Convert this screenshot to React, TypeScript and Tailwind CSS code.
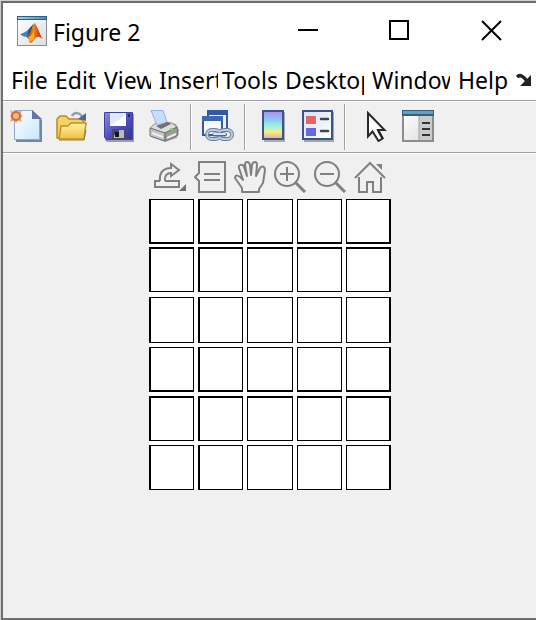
import type { ReactNode } from "react";

function MatlabIcon() {
  return (
    <svg width="30" height="30" viewBox="0 0 30 30" aria-hidden="true">
      <defs>
        <linearGradient id="appBg" x1="0" y1="0" x2="1" y2="1">
          <stop offset="0" stopColor="#ffffff" />
          <stop offset="1" stopColor="#dcdde2" />
        </linearGradient>
        <linearGradient id="appBar" x1="0" x2="1">
          <stop offset="0" stopColor="#9ed0e6" />
          <stop offset="1" stopColor="#4b8db5" />
        </linearGradient>
        <linearGradient id="peak" x1="0" y1="0" x2="1" y2="0">
          <stop offset="0" stopColor="#7a2418" />
          <stop offset="0.45" stopColor="#f08a1c" />
          <stop offset="0.65" stopColor="#e2571a" />
          <stop offset="1" stopColor="#a32a14" />
        </linearGradient>
      </defs>
      <rect x="0.5" y="0.5" width="29" height="29" fill="url(#appBg)" stroke="#8a8d92" />
      <rect x="0" y="0" width="30" height="4" fill="#2f5f86" />
      <rect x="1" y="1" width="28" height="2" fill="url(#appBar)" />
      <path d="M3 18.5 L9 15.5 L12 13 L16.5 8 L14 17 L10 21 L7 20.5 Z" fill="#3f83bb" />
      <path d="M12 13 L16.5 8 L14 16 L10 20 Z" fill="#2b4f7c" />
      <path d="M17.5 7 C19.5 8 21 14 25.5 23 C22.5 20.5 20.5 19.5 18 23 C16.5 25 14.5 27 13 27 C12.5 24 11 21.5 9.5 21 C14 18 14.5 10 17.5 7 Z" fill="url(#peak)" />
      <path d="M13 26.5 C12.5 24 11.5 22 11 21 C14 20 15 18 17 15 L17 23 Z" fill="#f7a928" />
    </svg>
  );
}

function NewIcon() {
  return (
    <svg width="32" height="32" viewBox="0 0 32 32" aria-hidden="true">
      <defs>
        <linearGradient id="page" x1="0" y1="0" x2="1" y2="1">
          <stop offset="0" stopColor="#ffffff" />
          <stop offset="1" stopColor="#c9e6fa" />
        </linearGradient>
      </defs>
      <path d="M6 3 H25 L32 10 V32 H6 Z" fill="#7187a6" />
      <path d="M4.5 0.5 H22.5 L29.5 8 V29.5 H4.5 Z" fill="url(#page)" stroke="#8ea8ca" />
      <path d="M22 0 L32 9 H22 Z" fill="#6873a6" />
      <path d="M0 0 L4 2 L6 0 L8 2 L12 0 L10.5 4 L13 6 L10.5 8 L12 12 L8 10.5 L6 13 L4 10.5 L0 12 L1.5 8 L0 6 L1.5 4 Z" fill="#e6a08a" />
      <circle cx="6" cy="6" r="4" fill="#f4c06e" stroke="#d8653f" strokeWidth="2" />
    </svg>
  );
}

function OpenIcon() {
  return (
    <svg width="32" height="32" viewBox="0 0 32 32" aria-hidden="true">
      <defs>
        <linearGradient id="folder" x1="0" y1="0" x2="0" y2="1">
          <stop offset="0" stopColor="#fff3a0" />
          <stop offset="1" stopColor="#efbf45" />
        </linearGradient>
      </defs>
      <path d="M1 28 V9 L4 6 H10 L13 9 H25 L28 12 V28 Z" fill="#f3d266" stroke="#b98a28" strokeWidth="1.5" strokeLinejoin="round" />
      <path d="M3 29 L5 16 H12 L15 13 H30 L28 29 Z" fill="url(#folder)" stroke="#c0912f" strokeWidth="1.5" strokeLinejoin="round" />
      <path d="M3 30 H28 L30 20" fill="none" stroke="#9b792f" />
      <path d="M16 6 C18 2 24 2 26 7" fill="none" stroke="#8ba0b5" strokeWidth="2.5" />
      <path d="M22 9 L30 3 V11 Z" fill="#50677f" />
    </svg>
  );
}

function SaveIcon() {
  return (
    <svg width="32" height="32" viewBox="0 0 32 32" aria-hidden="true">
      <defs>
        <linearGradient id="disk" x1="0" y1="0" x2="1" y2="1">
          <stop offset="0" stopColor="#8a8be6" />
          <stop offset="0.5" stopColor="#5050c2" />
          <stop offset="1" stopColor="#33338e" />
        </linearGradient>
      </defs>
      <path d="M4 4 H32 V32 H5 L3 30 Z" fill="#9a9cab" />
      <path d="M2.5 2.5 H30.5 V29.5 H4.5 L2.5 27.5 Z" fill="url(#disk)" stroke="#4142a0" />
      <rect x="8" y="3" width="16" height="13" fill="#dfeaff" />
      <path d="M8 16 L24 5 V16 Z" fill="#ffffff" />
      <rect x="26" y="4" width="2" height="3" fill="#25256d" />
      <rect x="10" y="19" width="13" height="10" fill="#4a4a5a" />
      <path d="M17 20 H22 V28 H12 V25 H17 Z" fill="#b9b9c4" />
      <rect x="13" y="22" width="4" height="5" fill="#15151c" />
    </svg>
  );
}

function PrintIcon() {
  return (
    <svg width="32" height="32" viewBox="0 0 32 32" aria-hidden="true">
      <path d="M3 18 L12 11 L28 14 L31 20 L29 28 L17 32 L3 27 Z" fill="#a5a5a5" />
      <path d="M2 18 L9 12 L24 13 L29 17 L17 23 Z" fill="#dededc" stroke="#858585" />
      <path d="M2 18 L17 23 V31 L2 26 Z" fill="#c3c3c0" stroke="#767676" />
      <path d="M17 23 L29 17 L30 25 L17 31 Z" fill="#9b9c9a" stroke="#707070" />
      <path d="M3 0.5 H15 L19 12 L9 15 Z" fill="#c4defc" stroke="#94b3dc" />
      <path d="M8 16 L20 12 L23 14 L13 19 Z" fill="#6f7375" />
      <path d="M4 23 L15 27 M19 28 L28 24" stroke="#ededed" strokeWidth="2" />
      <rect x="22" y="18" width="3" height="2" fill="#8bd44e" />
    </svg>
  );
}

function LinkIcon() {
  return (
    <svg width="32" height="32" viewBox="0 0 32 32" aria-hidden="true">
      <rect x="6" y="1" width="19" height="19" fill="#eaf0fa" stroke="#3b5b9c" strokeWidth="2" />
      <rect x="5" y="0" width="21" height="5" fill="#3459a0" />
      <rect x="1" y="7" width="19" height="18" fill="#f6f9ff" stroke="#38589b" strokeWidth="2" />
      <rect x="0" y="6" width="21" height="5" fill="#3f67ad" />
      <g fill="none">
        <rect x="5" y="20" width="13" height="9" rx="4.5" stroke="#6a80a0" strokeWidth="4" />
        <rect x="17" y="20" width="13" height="9" rx="4.5" stroke="#6a80a0" strokeWidth="4" />
        <rect x="5" y="20" width="13" height="9" rx="4.5" stroke="#b9cde2" strokeWidth="2" />
        <rect x="17" y="20" width="13" height="9" rx="4.5" stroke="#b9cde2" strokeWidth="2" />
        <path d="M12 24.5 H23" stroke="#52698a" strokeWidth="4" strokeLinecap="round" />
        <path d="M12 24 H23" stroke="#dbe7f3" strokeWidth="2" strokeLinecap="round" />
      </g>
    </svg>
  );
}

function ColorbarIcon() {
  return (
    <svg width="32" height="32" viewBox="0 0 32 32" aria-hidden="true">
      <defs>
        <linearGradient id="bar" x1="0" y1="0" x2="0" y2="1">
          <stop offset="0" stopColor="#ab8df0" />
          <stop offset="0.3" stopColor="#8fc4f5" />
          <stop offset="0.5" stopColor="#93efe0" />
          <stop offset="0.75" stopColor="#f3ee90" />
          <stop offset="1" stopColor="#f5a08d" />
        </linearGradient>
      </defs>
      <rect x="8" y="2" width="21" height="30" fill="#a9acb5" />
      <rect x="7" y="1" width="20" height="28" fill="url(#bar)" stroke="#3d5488" strokeWidth="2" />
    </svg>
  );
}

function LegendIcon() {
  return (
    <svg width="32" height="32" viewBox="0 0 32 32" aria-hidden="true">
      <defs>
        <linearGradient id="legend" x1="0" y1="0" x2="1" y2="1">
          <stop offset="0" stopColor="#d5e2f2" />
          <stop offset="1" stopColor="#ffffff" />
        </linearGradient>
      </defs>
      <rect x="2" y="2" width="30" height="30" fill="#a2a5af" />
      <rect x="1" y="1" width="29" height="28" fill="url(#legend)" stroke="#3d5488" strokeWidth="2" />
      <rect x="4" y="6" width="10" height="8" fill="#e56664" />
      <rect x="4" y="18" width="10" height="8" fill="#6868e4" />
      <path d="M19 9 H26 M19 21 H26" stroke="#42464c" strokeWidth="2.5" strokeLinecap="round" />
    </svg>
  );
}

function PointerIcon() {
  return (
    <svg width="32" height="32" viewBox="0 0 32 32" aria-hidden="true">
      <path d="M12 3 V26.5 L16.5 21.5 L22.5 31 L26.5 28.5 L22 20 H28.5 Z" fill="#fff" stroke="#292929" strokeWidth="2" />
      <path d="M22 20 L27 29" stroke="#222" strokeWidth="2" />
    </svg>
  );
}

function InspectorIcon() {
  return (
    <svg width="32" height="32" viewBox="0 0 32 32" aria-hidden="true">
      <defs>
        <linearGradient id="pane" x1="0" y1="0" x2="1" y2="1">
          <stop offset="0" stopColor="#ffffff" />
          <stop offset="1" stopColor="#dcdcdc" />
        </linearGradient>
      </defs>
      <rect x="1" y="1" width="30" height="30" fill="url(#pane)" stroke="#8d8d8d" strokeWidth="2" />
      <rect x="17" y="5" width="13" height="25" fill="#cbcbcb" />
      <path d="M17 5 V30" stroke="#a3a3a3" strokeWidth="1" />
      <rect x="0" y="0" width="32" height="6" fill="#365f7f" />
      <rect x="1" y="1" width="30" height="3" fill="#659ec1" />
      <path d="M20 13 H28 M20 19 H28 M20 25 H28" stroke="#333" strokeWidth="2" />
    </svg>
  );
}

function AxesIcon({ children }: { children: ReactNode }) {
  return (
    <svg width="32" height="32" viewBox="0 0 32 32" fill="none" stroke="#808080" strokeWidth="2" aria-hidden="true">
      {children}
    </svg>
  );
}

const axesTools = [
  {
    label: "Export",
    icon: (
      <AxesIcon>
        <path d="M6 20 H1 V26 H25 V20 H11" />
        <path d="M6 20 C5 12 9 7 17 7 V3 L25 9 L17 15 V12 C13 12 10 15 11 20" strokeWidth="2" />
        <path d="M32 23 V30 H25 Z" fill="#707070" stroke="none" />
      </AxesIcon>
    ),
  },
  {
    label: "Data tips",
    icon: (
      <AxesIcon>
        <path d="M5 1 H31 V31 H5 V20 L1 16 L5 12 Z" />
        <path d="M10 13 H26 M10 19 H26" />
      </AxesIcon>
    ),
  },
  {
    label: "Pan",
    icon: (
      <AxesIcon>
        <path d="M8 31 V27 L1 17 C1 13 5 14 9 19 L5 7 C4 3 9 3 10 6 L13 15 L11 4 C11 0 15 0 16 4 L17 14 L18 4 C19 0 23 0 23 4 L22 15 L26 7 C28 4 31 6 31 9 L29 22 L25 28 V31 Z" strokeLinejoin="round" />
      </AxesIcon>
    ),
  },
  {
    label: "Zoom in",
    icon: (
      <AxesIcon>
        <circle cx="13" cy="13" r="12" />
        <path d="M6 13 H20 M13 6 V20" />
        <path d="M21 21 L31 31" strokeWidth="3" />
      </AxesIcon>
    ),
  },
  {
    label: "Zoom out",
    icon: (
      <AxesIcon>
        <circle cx="13" cy="13" r="12" />
        <path d="M6 13 H20" />
        <path d="M21 21 L31 31" strokeWidth="3" />
      </AxesIcon>
    ),
  },
  {
    label: "Restore view",
    icon: (
      <AxesIcon>
        <path d="M1 17 L16 2 L31 17" />
        <path d="M5 16 V31 H13 V21 H19 V31 H27 V16" />
        <path d="M22 3 H28 V9 Z" fill="#808080" stroke="none" />
      </AxesIcon>
    ),
  },
];

const toolGroups = [
  [
    { label: "New figure", icon: <NewIcon /> },
    { label: "Open", icon: <OpenIcon /> },
    { label: "Save", icon: <SaveIcon /> },
    { label: "Print", icon: <PrintIcon /> },
  ],
  [{ label: "Link", icon: <LinkIcon /> }],
  [
    { label: "Insert colorbar", icon: <ColorbarIcon /> },
    { label: "Insert legend", icon: <LegendIcon /> },
  ],
  [
    { label: "Edit plot", icon: <PointerIcon /> },
    { label: "Property inspector", icon: <InspectorIcon /> },
  ],
];

const menus = [
  { label: "File", size: "w-[36px] mr-2" },
  { label: "Edit", size: "w-[41px] mr-2" },
  { label: "View", size: "w-[47px] mr-2" },
  { label: "Insert", size: "w-[59px] mr-1" },
  { label: "Tools", size: "w-[55px] mr-2" },
  { label: "Desktop", size: "w-[79px] mr-2" },
  { label: "Window", size: "w-[78px] mr-2" },
  { label: "Help", size: "w-[50px] mr-2" },
];

const windowButtons = [
  { label: "Minimize", path: "M1 11 H21" },
  { label: "Maximize", path: "M2 2 H20 V20 H2 Z" },
  { label: "Close", path: "M3 2 L22 21 M22 2 L3 21" },
];

const rows = [
  "h-[45px] border-b-2",
  "h-[45px] border-t-2",
  "h-[46px]",
  "h-[45px] border-b-2",
  "h-[45px] border-t-2",
  "h-[45px]",
];
const columns = ["border-l-2", "border-l-2", "", "", "border-r-2"];

export default function App() {
  return (
    <div className="min-h-screen flex border-l border-t border-[#cfd1cf] font-['Noto_Sans','Open_Sans',sans-serif] text-[23px] leading-[34px] text-black">
      <div className="flex-1 min-w-0 flex flex-col border-l-2 border-y-2 border-[#6d6e70] bg-[#f0f0f0]">
        <header className="flex h-[55px] bg-white">
          <div className="flex flex-1 min-w-0 items-center gap-[6px] pl-[14px]">
            <MatlabIcon />
            <h1 className="whitespace-nowrap pt-[2px]">Figure 2</h1>
          </div>
          {windowButtons.map((b) => (
            <button key={b.label} aria-label={b.label} className="flex w-[91px] items-center justify-center">
              <svg width="23" height="23" viewBox="0 0 23 23" fill="none" stroke="#000" strokeWidth="2" aria-hidden="true">
                <path d={b.path} />
              </svg>
            </button>
          ))}
        </header>

        <nav className="flex h-[42px] items-center bg-white pl-[8px] pt-[2px]">
          {menus.map((m) => (
            <button key={m.label} className={`shrink-0 overflow-hidden whitespace-nowrap text-left ${m.size}`}>
              {m.label}
            </button>
          ))}
          <button aria-label="More menus">
            <svg width="16" height="14" viewBox="0 0 16 14" aria-hidden="true">
              <path d="M1 4 C4 1 7 3 11 8" fill="none" stroke="#222" strokeWidth="3.5" />
              <path d="M15 2 V13 H4 Z" fill="#222" />
            </svg>
          </button>
        </nav>

        <div role="toolbar" className="flex h-[53px] border-y border-[#a0a0a0] pl-[7px] pt-[3px] shadow-[inset_0_1px_#fff,0_1px_#fff]">
          {toolGroups.map((group, i) => (
            <div key={group[0].label} className="flex h-[46px] items-center">
              {i > 0 && <div className="mx-[10px] h-full w-[2px] border-r border-l border-r-white border-l-[#a0a0a0]" />}
              <div className="flex gap-[14px] pb-[2px]">
                {group.map((t) => (
                  <button key={t.label} aria-label={t.label}>
                    {t.icon}
                  </button>
                ))}
              </div>
            </div>
          ))}
        </div>

        <main className="flex flex-1 flex-col items-center pl-px pt-2">
          <div role="toolbar" className="flex gap-2">
            {axesTools.map((t) => (
              <button key={t.label} aria-label={t.label}>
                {t.icon}
              </button>
            ))}
          </div>
          <div className="mt-[6px] grid grid-cols-[45px_45px_46px_45px_45px] grid-rows-[48px_50px_50px_49px_49px_45px] gap-x-1 bg-white">
            {rows.map((row, r) =>
              columns.map((column, c) => <div key={`${r}-${c}`} className={`border border-black bg-white ${row} ${column}`} />),
            )}
          </div>
        </main>
      </div>
    </div>
  );
}
